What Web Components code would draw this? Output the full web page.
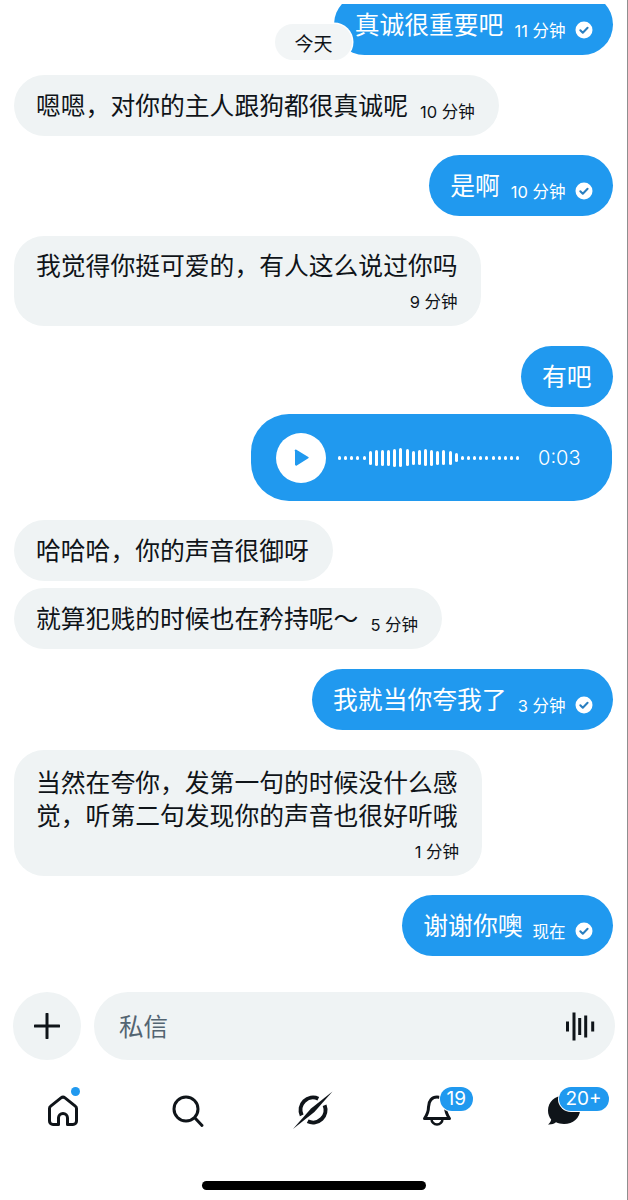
<!DOCTYPE html>
<html lang="zh">
<head>
<meta charset="utf-8">
<title>私信</title>
<style>
    html,body{margin:0;padding:0;background:#fff;overflow:hidden;}
    body{font-family:"Noto Sans CJK SC","Noto Sans",sans-serif;color:#0f1419;}
    svg{display:block;overflow:visible;}
</style>
</head>
<body>
<chat-app>
    <chat-list>
        <day-pill>今天</day-pill>
        <chat-bubble side="me" time="11 分钟" read style="--top:-10px">真诚很重要吧</chat-bubble>
        <chat-bubble side="them" time="10 分钟" style="--top:20px">嗯嗯，对你的主人跟狗都很真诚呢</chat-bubble>
        <chat-bubble side="me" time="10 分钟" read style="--top:19px">是啊</chat-bubble>
        <chat-bubble side="them" time="9 分钟" below style="--top:20px">我觉得你挺可爱的，有人这么说过你吗</chat-bubble>
        <chat-bubble side="me" style="--top:20px">有吧</chat-bubble>
        <voice-bubble time="0:03" style="--top:7px"></voice-bubble>
        <chat-bubble side="them" style="--top:19px">哈哈哈，你的声音很御呀</chat-bubble>
        <chat-bubble side="them" time="5 分钟" style="--top:7px">就算犯贱的时候也在矜持呢～</chat-bubble>
        <chat-bubble side="me" time="3 分钟" read style="--top:20px">我就当你夸我了</chat-bubble>
        <chat-bubble side="them" time="1 分钟" below style="--top:20px;--pad:15px">当然在夸你，发第一句的时候没什么感觉，听第二句发现你的声音也很好听哦</chat-bubble>
        <chat-bubble side="me" time="现在" read style="--top:19px;--meta-gap:10px">谢谢你噢</chat-bubble>
    </chat-list>
    <chat-composer placeholder="私信"></chat-composer>
    <nav-bar>
        <nav-item dot>
            <svg width="34" height="34" viewBox="0 0 34 34" fill="none" stroke="#0f1419" stroke-width="3" stroke-linejoin="round"><path d="M12.500 30.500H7a3.500 3.500 0 0 1-3.500-3.500V14.500a3 3 0 0 1 1.200-2.400L15 3.900a3.300 3.300 0 0 1 4 0L29.300 12.100a3 3 0 0 1 1.200 2.400V27a3.500 3.500 0 0 1-3.500 3.500H21.500V24a4.500 4.500 0 0 0-9 0z"/></svg>
        </nav-item>
        <nav-item>
            <svg width="34" height="34" viewBox="0 0 34 34" fill="none" stroke="#0f1419" stroke-width="3" stroke-linecap="round"><circle cx="15" cy="15" r="12"/><path d="M24 24l7 7.500"/></svg>
        </nav-item>
        <nav-item>
            <svg width="34" height="34" viewBox="0 0 34 34" fill="none" stroke="#0f1419" stroke-width="4"><path d="M22.300 4.700A12.500 12.500 0 0 0 5.700 21.300"/><path d="M28.600 11.300A12.500 12.500 0 0 1 11.700 27.300"/><path d="M-3 35L15 14.600 36.500-2.500 18.400 17.900z" fill="#0f1419" stroke="none"/></svg>
        </nav-item>
        <nav-item badge="19" style="--badge-left:19px">
            <svg width="34" height="34" viewBox="0 0 34 34" fill="none" stroke="#0f1419" stroke-width="3" stroke-linejoin="round"><path d="M3.500 24.500C6 21 7.500 18 7.500 13 7.500 7 11 3 16 3s8.500 4 8.500 10c0 5 1.500 8 4 11.500z"/><path d="M10.500 25a5.500 5.500 0 0 0 11 0" stroke-width="2.500"/></svg>
        </nav-item>
        <nav-item badge="20+" style="--badge-left:13px">
            <svg width="34" height="34" viewBox="0 0 34 34"><path fill="#0f1419" d="M18 1.500C9 1.500 2 8 2 16.500c0 3.800 1.300 6.800 3.200 9-.4 2-1.500 3.700-3.200 5 3 .3 6-.6 8-2.200 2.300 1.100 5 1.700 8 1.700 9 0 16-6 16-14S27 1.500 18 1.500z"/></svg>
        </nav-item>
    </nav-bar>
    <home-bar></home-bar>
</chat-app>

<script>
const appTemplate=document.createElement('template');
appTemplate.innerHTML=`
<style>
    :host{
        display:flex;
        flex-direction:column;
        box-sizing:border-box;
        width:628px;
        height:1200px;
        padding-top:4px;
        border-right:1px solid #8f8f8f;
    }
</style>
<slot></slot>
`;

class ChatApp extends HTMLElement{
    constructor(){
        super();
        this.attachShadow({mode:'open'}).appendChild(appTemplate.content.cloneNode(true));
    }
}

const listTemplate=document.createElement('template');
listTemplate.innerHTML=`
<style>
    :host{
        display:flex;
        flex-direction:column;
        flex:1;
        min-height:0;
        position:relative;
        overflow:hidden;
        padding:0 14px;
    }
</style>
<slot></slot>
`;

class ChatList extends HTMLElement{
    constructor(){
        super();
        this.attachShadow({mode:'open'}).appendChild(listTemplate.content.cloneNode(true));
    }
}

const pillTemplate=document.createElement('template');
pillTemplate.innerHTML=`
<style>
    :host{
        position:absolute;
        z-index:1;
        top:20px;
        left:275px;
        width:77px;
        height:36px;
        display:flex;
        align-items:center;
        justify-content:center;
        border-radius:18px;
        background:#f2f5f6;
        box-shadow:0 0 0 1.500px #fff;
        font-size:19px;
        color:#0f1419;
    }
</style>
<slot></slot>
`;

class DayPill extends HTMLElement{
    constructor(){
        super();
        this.attachShadow({mode:'open'}).appendChild(pillTemplate.content.cloneNode(true));
    }
}

const bubbleTemplate=document.createElement('template');
bubbleTemplate.innerHTML=`
<style>
    :host{
        display:block;
        align-self:flex-start;
        margin-top:var(--top,20px);
        flex:none;
    }
    :host([side="me"]){
        align-self:flex-end;
    }
    :host([below]){
        max-width:468px;
    }
    .bubble{
        display:flex;
        align-items:baseline;
        min-height:61px;
        box-sizing:border-box;
        padding:13px 24px 0 22px;
        border-radius:31px;
        background:#eff3f4;
        color:#0f1419;
        font-size:24.800px;
        line-height:33px;
        white-space:nowrap;
    }
    :host([side="me"]) .bubble{
        background:#2099ef;
        color:#fff;
        padding-left:21px;
        padding-right:21.500px;
    }
    :host([side="me"][read]) .bubble{
        padding-right:20.500px;
    }
    :host([below]) .bubble{
        display:block;
        padding:var(--pad,12px) 23px 0 22px;
        min-height:0;
        border-radius:30px;
        white-space:normal;
    }
    .meta{
        display:flex;
        align-items:center;
        flex:none;
        gap:9px;
        margin-left:var(--meta-gap,12px);
        position:relative;
        top:3px;
        font-family:Inter,"Noto Sans CJK SC",sans-serif;
        font-size:16.500px;
        line-height:20px;
        white-space:nowrap;
    }
    :host([side="me"]) .meta{
        margin-left:var(--meta-gap,11px);
    }
    :host([below]) .meta{
        justify-content:flex-end;
        margin:11px 0 0;
        top:0;
        padding-bottom:14px;
    }
    .meta[hidden],svg[hidden]{
        display:none;
    }
    svg{
        display:block;
        position:relative;
        top:-1px;
    }
</style>
<div class="bubble">
    <span class="text"><slot></slot></span>
    <span class="meta" id="meta">
        <span id="time"></span>
        <svg id="check" width="18" height="18" viewBox="0 0 18 18"><circle cx="9" cy="9" r="8.500" fill="#fff"/><path d="M5.300 9.300l2.500 2.500 4.800-5" fill="none" stroke="#2a7fc0" stroke-width="2" stroke-linecap="round" stroke-linejoin="round"/></svg>
    </span>
</div>
`;

class ChatBubble extends HTMLElement{
    #meta;
    #time;
    #check;
    constructor(){
        super();
        const shadow=this.attachShadow({mode:'open'});
        shadow.appendChild(bubbleTemplate.content.cloneNode(true));
        this.#meta=shadow.getElementById('meta');
        this.#time=shadow.getElementById('time');
        this.#check=shadow.getElementById('check');
    }

    connectedCallback(){
        const time=this.getAttribute('time');
        this.#time.textContent=time;
        this.#meta.hidden=!time;
        // svg-elementillä ei ole hidden-ominaisuutta
        this.#check.toggleAttribute('hidden',!this.hasAttribute('read'));
    }
}

const voiceTemplate=document.createElement('template');
voiceTemplate.innerHTML=`
<style>
    :host{
        display:flex;
        align-items:center;
        align-self:flex-end;
        flex:none;
        box-sizing:border-box;
        width:361px;
        height:87px;
        margin-top:var(--top,7px);
        margin-right:1px;
        padding-left:25px;
        border-radius:38px;
        background:#2099ef;
        color:#fff;
    }
    .play{
        display:flex;
        align-items:center;
        justify-content:center;
        width:50px;
        height:50px;
        border-radius:50%;
        background:#fff;
    }
    #wave{
        display:flex;
        align-items:center;
        gap:3.150px;
        margin-left:12px;
    }
    #wave i{
        display:block;
        width:3px;
        border-radius:1.500px;
        background:#fff;
    }
    #time{
        margin-left:19px;
        font-family:Inter,sans-serif;
        font-size:20px;
        font-weight:300;
    }
</style>
<div class="play">
    <svg width="18" height="20" viewBox="0 0 18 20"><path d="M3 3.500v13a1.200 1.200 0 0 0 1.800 1l11.500-7.200a.7.7 0 0 0 0-1.200L4.800 1.900A1.200 1.200 0 0 0 3 3.500z" fill="#2099ef"/></svg>
</div>
<div id="wave"></div>
<span id="time"></span>
`;

const aaltoKorkeudet=[4,4,4,4,4,14,16,16,16,18,19,17,14,15,17,16,14,15,14,9,4,4,4,4,4,4,4,4,4,4];

class VoiceBubble extends HTMLElement{
    #time;
    constructor(){
        super();
        const shadow=this.attachShadow({mode:'open'});
        shadow.appendChild(voiceTemplate.content.cloneNode(true));
        this.#time=shadow.getElementById('time');
        const wave=shadow.getElementById('wave');
        for(const korkeus of aaltoKorkeudet){
            const bar=document.createElement('i');
            bar.style.height=korkeus+'px';
            wave.appendChild(bar);
        }
    }

    connectedCallback(){
        this.#time.textContent=this.getAttribute('time');
    }
}

const composerTemplate=document.createElement('template');
composerTemplate.innerHTML=`
<style>
    :host{
        display:flex;
        flex:none;
        gap:13px;
        height:68px;
        padding:0 12px 0 13px;
    }
    .plus{
        display:flex;
        align-items:center;
        justify-content:center;
        flex:none;
        width:68px;
        height:68px;
        border-radius:50%;
        background:#eff3f4;
    }
    .field{
        display:flex;
        align-items:center;
        justify-content:space-between;
        flex:1;
        padding:0 20px 0 25px;
        border-radius:34px;
        background:#eff3f4;
    }
    #placeholder{
        font-size:24.500px;
        color:#536471;
        position:relative;
        top:-1px;
    }
</style>
<div class="plus">
    <svg width="26" height="26" viewBox="0 0 26 26" fill="none" stroke="#0f1419" stroke-width="3" stroke-linecap="round"><path d="M13 1v24M1 13h24"/></svg>
</div>
<div class="field">
    <span id="placeholder"></span>
    <svg width="30" height="30" viewBox="0 0 30 30" fill="none" stroke="#0f1419" stroke-width="3"><path d="M2.500 10.500v10M9 1.500v28M14.700 7v17M20.700 4.500v22M27.700 10.500v10"/></svg>
</div>
`;

class ChatComposer extends HTMLElement{
    #placeholder;
    constructor(){
        super();
        const shadow=this.attachShadow({mode:'open'});
        shadow.appendChild(composerTemplate.content.cloneNode(true));
        this.#placeholder=shadow.getElementById('placeholder');
    }

    connectedCallback(){
        this.#placeholder.textContent=this.getAttribute('placeholder');
    }
}

const navTemplate=document.createElement('template');
navTemplate.innerHTML=`
<style>
    :host{
        display:flex;
        flex:none;
        margin-top:34px;
        padding-right:2px;
    }
</style>
<slot></slot>
`;

class NavBar extends HTMLElement{
    constructor(){
        super();
        this.attachShadow({mode:'open'}).appendChild(navTemplate.content.cloneNode(true));
    }
}

const navItemTemplate=document.createElement('template');
navItemTemplate.innerHTML=`
<style>
    :host{
        display:flex;
        justify-content:center;
        flex:1;
        height:34px;
    }
    .icon{
        position:relative;
        width:34px;
        height:34px;
    }
    #badge{
        position:absolute;
        top:-7px;
        left:var(--badge-left,19px);
        display:flex;
        align-items:center;
        justify-content:center;
        height:24px;
        padding:0 7px;
        border-radius:12px;
        background:#2099ef;
        box-shadow:0 0 0 1px #fff;
        color:#fff;
        font-family:Inter,sans-serif;
        font-size:19px;
        line-height:24px;
    }
    #dot{
        position:absolute;
        top:-7px;
        left:25px;
        width:9px;
        height:9px;
        border-radius:50%;
        background:#2099ef;
    }
    [hidden]{
        display:none !important;
    }
</style>
<div class="icon">
    <slot></slot>
    <span id="dot"></span>
    <span id="badge"></span>
</div>
`;

class NavItem extends HTMLElement{
    #badge;
    #dot;
    constructor(){
        super();
        const shadow=this.attachShadow({mode:'open'});
        shadow.appendChild(navItemTemplate.content.cloneNode(true));
        this.#badge=shadow.getElementById('badge');
        this.#dot=shadow.getElementById('dot');
    }

    connectedCallback(){
        const badge=this.getAttribute('badge');
        this.#badge.textContent=badge;
        this.#badge.hidden=!badge;
        this.#dot.hidden=!this.hasAttribute('dot');
    }
}

const homeTemplate=document.createElement('template');
homeTemplate.innerHTML=`
<style>
    :host{
        display:block;
        flex:none;
        align-self:center;
        width:224px;
        height:9px;
        margin:53px 0 10px;
        border-radius:5px;
        background:#000;
    }
</style>
`;

class HomeBar extends HTMLElement{
    constructor(){
        super();
        this.attachShadow({mode:'open'}).appendChild(homeTemplate.content.cloneNode(true));
    }
}

customElements.define('chat-app',ChatApp);
customElements.define('chat-list',ChatList);
customElements.define('day-pill',DayPill);
customElements.define('chat-bubble',ChatBubble);
customElements.define('voice-bubble',VoiceBubble);
customElements.define('chat-composer',ChatComposer);
customElements.define('nav-bar',NavBar);
customElements.define('nav-item',NavItem);
customElements.define('home-bar',HomeBar);
</script>
</body>
</html>
